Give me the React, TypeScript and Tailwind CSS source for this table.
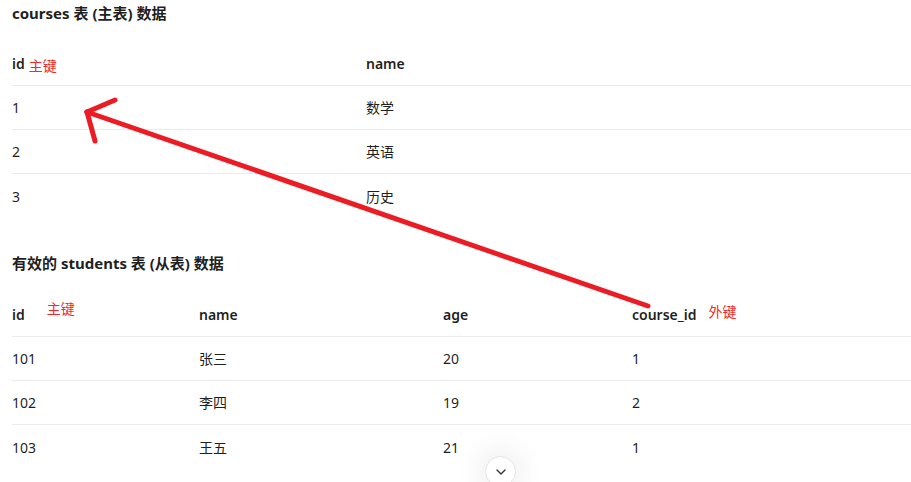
import { ChevronDown } from "lucide-react";

const courses = [
  { id: "1", name: "数学" },
  { id: "2", name: "英语" },
  { id: "3", name: "历史" },
];

const students = [
  { id: "101", name: "张三", age: "20", course: "1" },
  { id: "102", name: "李四", age: "19", course: "2" },
  { id: "103", name: "王五", age: "21", course: "1" },
];

const font = {
  fontFamily: '"Noto Sans", "Noto Sans CJK SC", sans-serif',
};

export default function App() {
  return (
    <div
      className="relative h-[482px] w-[911px] overflow-hidden bg-white pl-3 text-[14px] text-[#1f1f1f]"
      style={font}
    >
      {/* courses */}
      <h3 className="h-[26px] text-[15px] font-bold leading-[26px]">courses 表 (主表) 数据</h3>
      <div className="mt-[15px]">
        <div className="grid h-[45px] grid-cols-[354px_1fr] items-center border-b border-[#ebebeb] font-semibold">
          <div className="flex items-center gap-1">
            <span>id</span>
            <span className="mt-[5px] font-normal text-[#ee2a2a]">主键</span>
          </div>
          <div>name</div>
        </div>
        {courses.map((c, i) => (
          <div
            key={c.id}
            className={`grid h-[44px] grid-cols-[354px_1fr] items-center ${i < courses.length - 1 ? "border-b border-[#ebebeb]" : ""}`}
          >
            <div>{c.id}</div>
            <div>{c.name}</div>
          </div>
        ))}
      </div>

      {/* students */}
      <h3 className="mt-[32px] h-[26px] text-[15px] font-bold leading-[26px]">有效的 students 表 (从表) 数据</h3>
      <div className="mt-[16px]">
        <div className="grid h-[45px] grid-cols-[187px_244px_189px_1fr] items-center border-b border-[#ebebeb] font-semibold">
          <div className="flex items-center">
            <span>id</span>
            <span className="mb-[12px] ml-[22px] font-normal text-[#ee2a2a]">主键</span>
          </div>
          <div>name</div>
          <div>age</div>
          <div className="flex items-center">
            <span>course_id</span>
            <span className="mb-[6px] ml-[12px] font-normal text-[#ee2a2a]">外键</span>
          </div>
        </div>
        {students.map((s, i) => (
          <div
            key={s.id}
            className={`grid h-[44px] grid-cols-[187px_244px_189px_1fr] items-center ${i < students.length - 1 ? "border-b border-[#ebebeb]" : ""}`}
          >
            <div>{s.id}</div>
            <div>{s.name}</div>
            <div>{s.age}</div>
            <div>{s.course}</div>
          </div>
        ))}
      </div>

      {/* annotation arrow */}
      <svg className="pointer-events-none absolute left-0 top-0" width="911" height="482">
        <g stroke="#ec1c24" strokeWidth="5" strokeLinecap="round" fill="none">
          <line x1="648" y1="306" x2="87" y2="112" />
          <line x1="87" y1="112" x2="115" y2="100" />
          <line x1="87" y1="112" x2="95" y2="141" />
        </g>
      </svg>

      {/* scroll button */}
      <div className="absolute left-[485px] top-[456px] flex h-[31px] w-[31px] items-center justify-center rounded-full border border-[#e5e5e5] bg-white shadow-[0_0_24px_10px_rgba(0,0,0,0.05)]">
        <ChevronDown size={16} strokeWidth={2} className="text-[#333]" />
      </div>
    </div>
  );
}
